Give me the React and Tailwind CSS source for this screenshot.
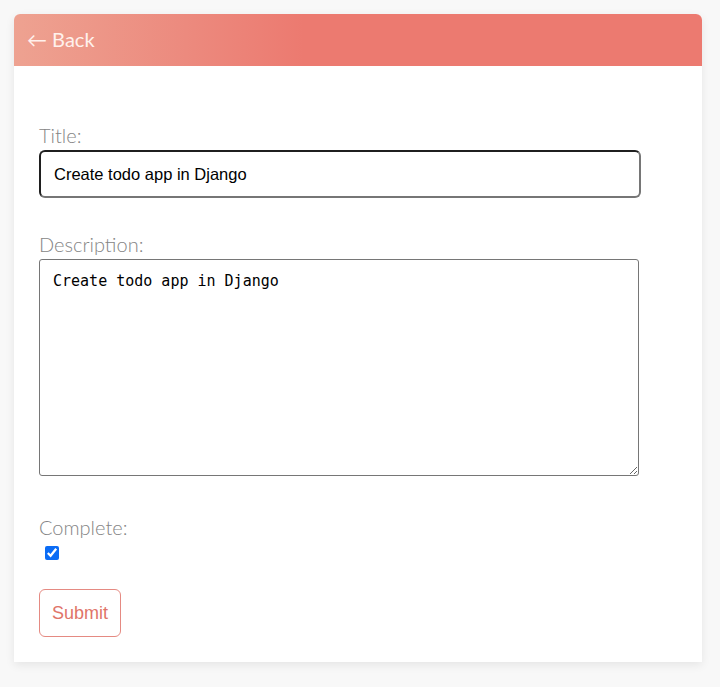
import React from "react";

export default function App() {
  return (
    <div className="min-h-[687px] w-full bg-[#f8f8f8] pt-[14px] pl-[14px] pr-[18px]" style={{ fontFamily: "Lato, 'Open Sans', sans-serif" }}>
      <div className="w-[688px] h-[648px] bg-white rounded-t-[6px] shadow-[0_3px_10px_rgba(0,0,0,0.08)]">
        <div className="h-[52px] rounded-t-[6px] bg-[linear-gradient(90deg,#eea291_0%,#ec8a7e_25%,#ec7a70_42%,#ec7a70_100%)] flex items-center pl-[13px]">
          <span className="text-[20px] font-normal text-[#fff1ec] leading-none -mt-[2px]">← Back</span>
        </div>
        <form className="px-[25px] pt-[58px] flex flex-col">
          <label className="text-[20px] font-light text-[#858585] leading-[22px]">Title:</label>
          <input
            defaultValue="Create todo app in Django"
            className="mt-[4px] w-[602px] h-[48px] border-2 border-[#1f1f1f] border-b-[#767676] border-r-[#767676] rounded-[6px] px-[13px] text-[16.5px] text-black outline-none"
            style={{ fontFamily: "'Liberation Sans', Arial, sans-serif" }}
          />
          <label className="mt-[35px] text-[20px] font-light text-[#858585] leading-[22px]">Description:</label>
          <textarea
            defaultValue="Create todo app in Django"
            className="mt-[4px] w-[600px] h-[217px] border border-[#767676] rounded-[3px] px-[13px] pt-[10px] text-[15px] text-black outline-none resize-y leading-[22px]"
            style={{ fontFamily: "'DejaVu Sans Mono', monospace" }}
          />
          <label className="mt-[40px] text-[20px] font-light text-[#858585] leading-[22px]">Complete:</label>
          <div className="mt-[8px] pl-[6px] h-[14px] flex">
            <input type="checkbox" defaultChecked className="w-[14px] h-[14px] m-0 accent-[#0b6cf5]" />
          </div>
          <div className="mt-[29px]">
            <button
              type="button"
              className="w-[82px] h-[48px] border border-[#e58a82] rounded-[6px] bg-white text-[18px] text-[#e07468]"
              style={{ fontFamily: "'Liberation Sans', Arial, sans-serif" }}
            >
              Submit
            </button>
          </div>
        </form>
      </div>
    </div>
  );
}
